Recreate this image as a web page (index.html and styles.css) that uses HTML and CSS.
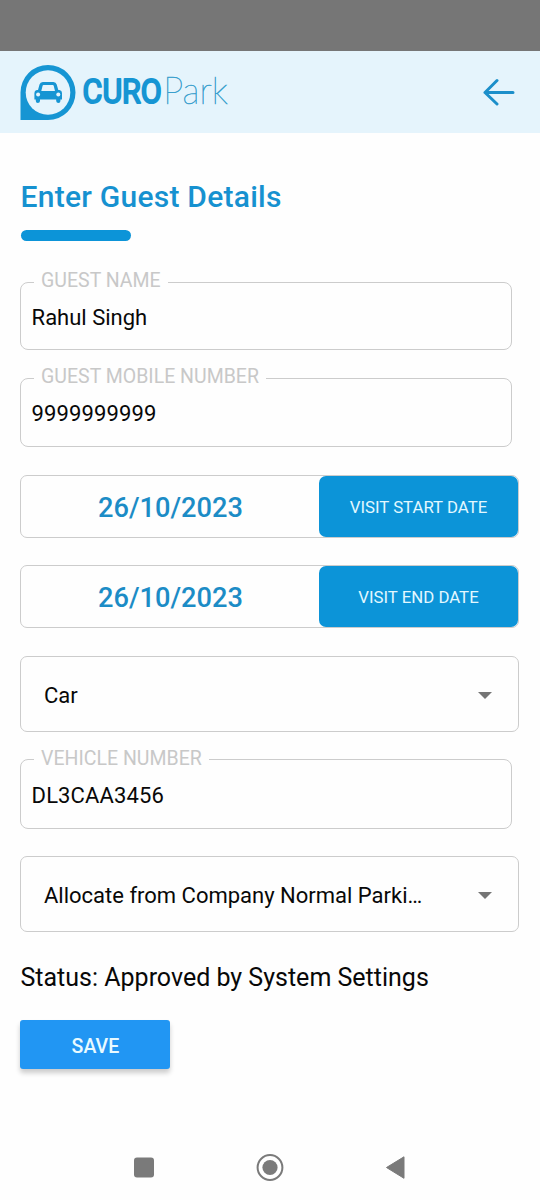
FILE: index.html
```html
<!DOCTYPE html>
<html lang="en">
<head>
<meta charset="utf-8">
<title>CUROPark - Guest Details</title>
<link rel="stylesheet" href="styles.css">
</head>
<body>
<div class="status-bar"></div>
<header class="header">
  <svg class="logo" width="212" height="60" viewBox="0 0 212 60" role="img" aria-label="CUROPark">
    <path class="pin" d="M.5 57V29.5A27.5 27.5 0 1 1 28 57Z"/>
    <circle class="pin-hole" cx="28" cy="29.5" r="22.3"/>
    <path class="car-body" fill-rule="evenodd" d="M19.5 21.5Q20.2 19 22.8 19H33.4Q36 19 36.7 21.5L38.3 27H39.5Q42 27.6 42 30V36.6H40.4V38Q40.4 40 38.4 40Q36.4 40 36.2 38V36.6H20V38Q19.8 40 17.8 40Q15.8 40 15.8 38V36.6H14.4V30Q14.4 27.6 16.8 27H18ZM22.6 22.8L21.3 28H35L33.7 22.8Q33.5 22.1 32.8 22.1H23.5Q22.8 22.1 22.6 22.8Z"/>
    <circle class="lamp" cx="18.1" cy="31.6" r="2"/>
    <circle class="lamp" cx="38.3" cy="31.6" r="2"/>
    <text class="word-bold" x="62.6" y="40.2" textLength="79.2" lengthAdjust="spacingAndGlyphs">CURO</text>
    <text class="word-thin" x="143.2" y="41" textLength="64.5" lengthAdjust="spacingAndGlyphs">Park</text>
  </svg>
  <svg class="back" width="34" height="30" viewBox="0 0 34 30" aria-label="Back"><path d="M31 15.5H3M15 3.5L3 15.5L15 27"/></svg>
</header>
<main class="content">
  <h1 class="title">Enter Guest Details</h1>
  <div class="underline"></div>
  <form class="form">
    <fieldset class="field"><legend>GUEST NAME</legend><div class="value">Rahul Singh</div></fieldset>
    <fieldset class="field mobile"><legend>GUEST MOBILE NUMBER</legend><div class="value digits">9999999999</div></fieldset>
    <div class="date-row start"><span class="date">26/10/2023</span><button type="button" class="date-button">VISIT START DATE</button></div>
    <div class="date-row end"><span class="date">26/10/2023</span><button type="button" class="date-button">VISIT END DATE</button></div>
    <div class="select"><span>Car</span><i class="caret"></i></div>
    <fieldset class="field vehicle"><legend>VEHICLE NUMBER</legend><div class="value digits">DL3CAA3456</div></fieldset>
    <div class="select allocation"><span>Allocate from Company Normal Parki…</span><i class="caret"></i></div>
    <p class="status">Status: Approved by System Settings</p>
    <button type="button" class="save">SAVE</button>
  </form>
</main>
<nav class="nav">
  <svg width="540" height="66" viewBox="0 0 540 66">
    <rect x="134" y="23.5" width="20" height="20" rx="3"/>
    <circle class="ring" cx="270" cy="33.5" r="12.4"/>
    <circle cx="270" cy="33.5" r="7.6"/>
    <path d="M386.5 33.5L404 22.8V44.3Z" stroke="#7a7a7a" stroke-linejoin="round"/>
  </svg>
</nav>
</body>
</html>
```
FILE: styles.css
```css
* { box-sizing: border-box; }
body {
  margin: 0;
  width: 540px;
  height: 1200px;
  display: flex;
  flex-direction: column;
  background: #fefefe;
  color: #080808;
  font-family: Roboto, sans-serif;
  overflow: hidden;
}
.status-bar { height: 51px; background: #767676; }
.header {
  height: 82px;
  padding: 12px 24px 0 20px;
  background: #e5f4fc;
  display: flex;
  justify-content: space-between;
}
.pin, .car-body { fill: #1695d3; }
.pin-hole, .lamp { fill: #e5f4fc; }
.word-bold {
  font: 400 34px Roboto, sans-serif;
  fill: #1695d3;
  stroke: #1695d3;
  stroke-width: 2;
  stroke-linejoin: round;
}
.word-thin { font: 100 37px Lato, sans-serif; fill: #3a9fcd; stroke: #3a9fcd; stroke-width: .6; }
.back { margin-top: 14px; fill: none; stroke: #1c8fca; stroke-width: 3; stroke-linecap: round; stroke-linejoin: round; }
.content { flex: 1; padding: 45px 20px 0; }
.title {
  margin: 0 0 0 .5px;
  height: 38px;
  line-height: 38px;
  font-size: 30px;
  font-weight: 500;
  letter-spacing: .25px;
  color: #1691d0;
}
.underline { width: 110px; height: 11px; margin: 14px 0 0 .5px; border-radius: 6px; background: #0c94d8; }
.form { display: flex; flex-direction: column; align-items: flex-start; margin-top: 29px; }
.field {
  width: 492px;
  height: 80px;
  margin: 0 0 0 .4px;
  padding: 0 10.2px;
  border: 1.4px solid #ccc;
  border-radius: 8px;
  min-width: 0;
}
.field legend { height: 24px; margin-left: 2.5px; padding: 0 7px; font-size: 19.5px; line-height: 22px; color: #c8c8c8; }
.value { font-size: 22px; line-height: 28px; margin-top: 10px; }
.digits { letter-spacing: .12px; }
.mobile { margin-top: 16px; height: 81px; }
.date-row {
  display: flex;
  width: 499px;
  height: 63px;
  border: 1.4px solid #ccc;
  border-radius: 7px;
}
.start { margin-top: 28px; }
.end { margin: 27.4px 0 28px; }
.date { flex: 1; padding-left: 1px; text-align: center; font-size: 27.2px; font-weight: 500; line-height: 64px; color: #1c8cc6; }
.date-button {
  width: 199px;
  height: 61px;
  padding: 0;
  border: 0;
  border-radius: 7px;
  background: #0c94d8;
  color: #e2f8ff;
  font: 400 16.8px Roboto, sans-serif;
}
.select {
  width: 499px;
  height: 75.5px;
  padding: 2px 26px 0 23px;
  border: 1.4px solid #ccc;
  border-radius: 7px;
  display: flex;
  align-items: center;
  justify-content: space-between;
  font-size: 22px;
}
.caret { border: 7px solid transparent; border-top: 7px solid #757575; border-bottom: 0; }
.vehicle { margin-top: 16px; height: 81px; }
.allocation { margin-top: 27.4px; }
.status { margin: 30.4px 0 0 .5px; font-size: 25px; line-height: 32px; }
.save {
  width: 150px;
  height: 49px;
  margin: 26px 0 0 .4px;
  padding: 4px 0 0;
  border: 0;
  border-radius: 3px;
  background: #2196f3;
  box-shadow: 0 4px 5px rgba(0, 0, 0, .2);
  color: #e8faff;
  font: 500 19.5px Roboto, sans-serif;
}
.nav { height: 66px; }
.nav svg { display: block; fill: #7a7a7a; }
.nav .ring { fill: none; stroke: #7a7a7a; stroke-width: 2; }
```
